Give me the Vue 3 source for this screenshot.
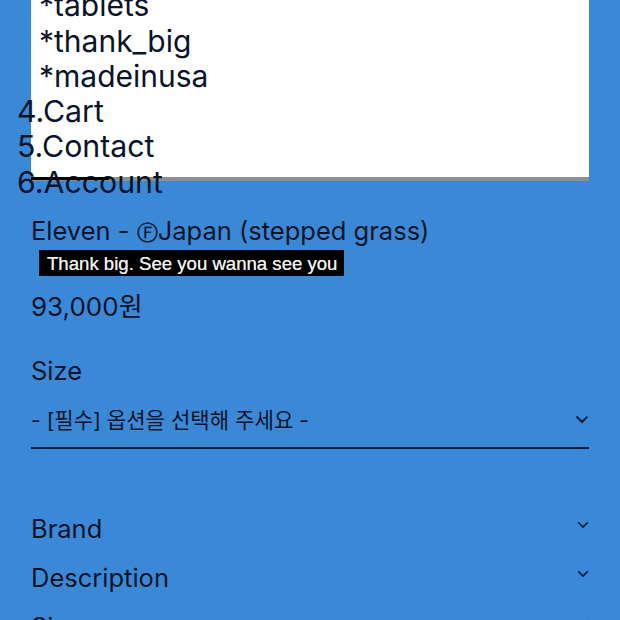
<script setup>
const subItems = ['*tablets', '*thank_big', '*madeinusa']
const menuItems = ['4.Cart', '5.Contact', '6.Account']
const accordion = ['Brand', 'Description', 'Size']
</script>

<template>
  <div class="page">
    <div class="panel">
      <ul class="sub">
        <li v-for="s in subItems" :key="s">{{ s }}</li>
      </ul>
      <ul class="menu">
        <li v-for="m in menuItems" :key="m">{{ m }}</li>
      </ul>
      <i class="bar"></i>
    </div>
    <section class="info">
      <h1 class="title">Eleven - <span class="mark">Ⓕ</span>Japan (stepped grass)</h1>
      <p class="tag"><span>Thank big. See you wanna see you</span></p>
      <p class="price">93,000원</p>
      <p class="label">Size</p>
      <div class="select">
        <span>- [필수] 옵션을 선택해 주세요 -</span>
        <svg class="chev" viewBox="0 0 14 9"><path d="M1.5 1.5 7 7l5.5-5.5" /></svg>
      </div>
      <div class="acc">
        <div v-for="a in accordion" :key="a" class="acc-row">
          <span>{{ a }}</span>
          <svg class="chev small" viewBox="0 0 14 9"><path d="M1.5 1.5 7 7l5.5-5.5" /></svg>
        </div>
      </div>
    </section>
  </div>
</template>

<style>
html, body { margin: 0; background: #3a89d6; }
</style>

<style scoped>
.page {
  width: 620px;
  height: 620px;
  overflow: hidden;
  background: #3a89d6;
  color: #0a1428;
  font-family: Inter, "Noto Sans CJK KR", sans-serif;
}
ul { list-style: none; margin: 0; padding: 0; }
.panel {
  position: relative;
  box-sizing: border-box;
  margin: -12px 31px 0;
  height: 193px;
  background: #fff;
  border-bottom: 4px solid #8f8f8f;
  font-size: 30px;
  line-height: 35.5px;
}
.sub { padding-left: 8px; }
.menu { margin-left: -14px; margin-top: -1px; height: 106px; font-size: 30.3px; }
.bar {
  position: absolute;
  left: 0;
  bottom: -3px;
  width: 78px;
  height: 3px;
  background: #000;
}
.info { padding: 34px 31px 0; }
.title { margin: 0; font-size: 25.5px; font-weight: 400; line-height: 32px; }
.mark { font-family: "DejaVu Sans", sans-serif; font-size: 21px; -webkit-text-stroke: 0.3px currentColor; }
.tag { margin: 1px 0 0 8px; line-height: 0; }
.tag span {
  display: inline-block;
  background: #000;
  color: #eee;
  font-family: "Liberation Sans", sans-serif;
  font-size: 18.6px;
  line-height: 26px;
  padding: 1px 7px 0 8px;
  height: 25px;
  text-shadow: 0 0 0.6px #eee;
}
.price { margin: 15px 0 0; font-size: 26px; line-height: 32px; }
.label { margin: 32px 0 0; font-size: 25.5px; line-height: 32px; }
.select {
  display: flex;
  justify-content: space-between;
  align-items: center;
  height: 57px;
  margin-top: 5px;
  border-bottom: 2px solid #0a1e3c;
  font-size: 21.1px;
  box-sizing: border-box;
}
.chev { width: 14px; height: 9px; fill: none; stroke: #0a1e3c; stroke-width: 2; }
.select > span { margin-bottom: 2px; }
.small { width: 12px; height: 8px; margin: 0 0 8px; }
.acc { margin-top: 55px; }
.acc-row {
  display: flex;
  justify-content: space-between;
  align-items: center;
  height: 49px;
  font-size: 25.5px;
}
</style>
